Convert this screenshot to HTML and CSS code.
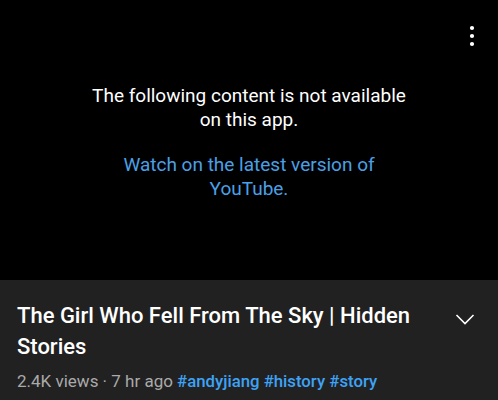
FILE: index.html
```html
<!DOCTYPE html>
<html>
<head>
<meta charset="utf-8">
<link rel="stylesheet" href="styles.css">
</head>
<body>
<div class="player">
  <svg class="menu" width="8" height="24" viewBox="0 0 8 24">
    <circle cx="4" cy="4" r="2.1" fill="#fff"/>
    <circle cx="4" cy="12" r="2.1" fill="#fff"/>
    <circle cx="4" cy="20" r="2.1" fill="#fff"/>
  </svg>
  <div class="msg">
    <p class="msg-main">The following content is not available<br>on this app.</p>
    <p class="msg-link">Watch on the latest version of<br>YouTube.</p>
  </div>
</div>
<div class="info">
  <div class="title-row">
    <h1 class="title">The Girl Who Fell From The Sky | Hidden Stories</h1>
    <svg class="chev" width="20" height="12" viewBox="0 0 20 12">
      <path d="M1.5 2 L10 10.5 L18.5 2" fill="none" stroke="#fff" stroke-width="1.6"/>
    </svg>
  </div>
  <div class="meta">2.4K views · 7 hr ago <span class="tags">#andyjiang #history #story</span></div>
</div>
</body>
</html>
```
FILE: styles.css
```css
html, body {
  margin: 0;
  padding: 0;
  background: #212121;
  font-family: Roboto, "Noto Sans", sans-serif;
}
.player {
  position: relative;
  height: 280px;
  background: #000;
  display: flex;
  align-items: flex-start;
  justify-content: center;
}
.menu {
  position: absolute;
  left: 467.5px;
  top: 24px;
}
.msg {
  margin-top: 84px;
  text-align: center;
}
.msg p {
  margin: 0;
  font-size: 19px;
  line-height: 24px;
}
.msg-main {
  color: #fff;
}
.msg-link {
  color: #4aa0e6;
  margin-top: 21px !important;
}
.info {
  padding: 20px 17px 0 17px;
}
.title-row {
  display: flex;
  align-items: flex-start;
  justify-content: space-between;
}
.title {
  margin: 0;
  width: 410px;
  color: #fff;
  font-size: 22px;
  line-height: 31px;
  font-weight: 500;
}
.chev {
  margin-top: 13px;
  margin-right: 6px;
}
.meta {
  margin-top: 7px;
  color: #aaa;
  font-size: 17px;
  line-height: 24px;
}
.tags {
  color: #3ea3f5;
  font-weight: 500;
  font-size: 16.75px;
}
```
